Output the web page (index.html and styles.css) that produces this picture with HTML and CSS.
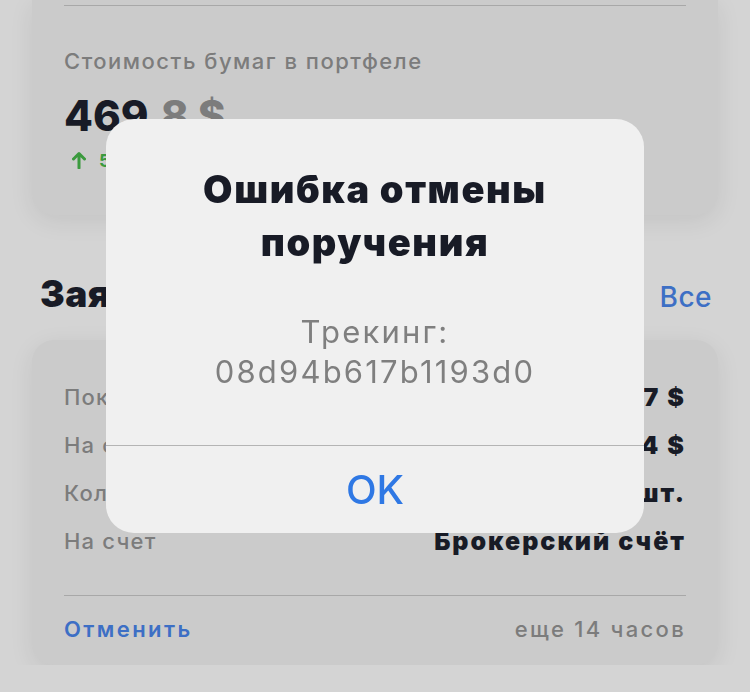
FILE: index.html
```html
<!DOCTYPE html>
<html lang="ru">
<head>
    <meta charset="UTF-8">
    <meta name="viewport" content="width=device-width, initial-scale=1.0">
    <title>Портфель</title>
    <link rel="stylesheet" href="styles.css">
</head>
<body>

    <div class="screen">
        <!-- сводка по портфелю -->
        <div class="card card-top">
            <div class="divider"></div>
            <div class="portfolio-label">Стоимость бумаг в портфеле</div>
            <div class="portfolio-value">469<span class="fraction">,8 $</span></div>
            <div class="change">
                <svg class="arrow" width="14" height="18" viewBox="0 0 14 18">
                    <path d="M7 17V3M1.5 8L7 2.5 12.5 8" fill="none" stroke="currentColor" stroke-width="3" stroke-linecap="round" stroke-linejoin="round"/>
                </svg>
                <span>5,1 $ (1,1%)</span>
            </div>
        </div>

        <div class="section-head">
            <h2>Заявки</h2>
            <a href="#" class="link-all">Все</a>
        </div>

        <!-- активная заявка -->
        <div class="card card-order">
            <div class="row"><span class="label">Покупка</span><span class="value">12,57 $</span></div>
            <div class="row"><span class="label">На сумму</span><span class="value">125,74 $</span></div>
            <div class="row"><span class="label">Количество</span><span class="value">10 шт.</span></div>
            <div class="row"><span class="label">На счет</span><span class="value">Брокерский счёт</span></div>
            <div class="divider divider-order"></div>
            <div class="order-footer">
                <a href="#" class="link-cancel">Отменить</a>
                <span class="expires">еще 14 часов</span>
            </div>
        </div>
    </div>

    <!-- окно с ошибкой -->
    <div class="overlay">
        <div class="alert">
            <div class="alert-body">
                <div class="alert-title">Ошибка отмены поручения</div>
                <div class="alert-text">Трекинг:<br>08d94b617b1193d0</div>
            </div>
            <button class="alert-button">OK</button>
        </div>
    </div>

</body>
</html>
```

FILE: styles.css
```css
body {
    font-family: Inter, 'Noto Sans', sans-serif;
    background-color: #d4d4d4;
    color: #181b26;
    margin: 0;
    overflow: hidden;
}
.screen {
    padding: 0 32px;
}
.card {
    background: #cbcbcb;
    border-radius: 22px;
    box-shadow: 0 6px 24px rgba(0, 0, 0, 0.08);
    padding: 0 32px;
}
.card-top {
    border-radius: 0 0 22px 22px;
    padding-top: 5px;
    padding-bottom: 43px;
}
.divider {
    height: 1px;
    background: #a8a8a8;
}
.portfolio-label {
    margin-top: 42px;
    font-size: 22px;
    line-height: 26px;
    font-weight: 500;
    color: #7c7c7c;
    letter-spacing: 1.5px;
}
.portfolio-value {
    margin-top: 16px;
    font-size: 42px;
    line-height: 52px;
    font-weight: 800;
}
.fraction {
    color: #7c7c7c;
}
.change {
    margin-top: 6px;
    display: flex;
    align-items: center;
    gap: 13px;
    height: 24px;
    padding-left: 8px;
    color: #3b9a3e;
    font-size: 18px;
    font-weight: 700;
}
.section-head {
    display: flex;
    justify-content: space-between;
    align-items: center;
    margin-top: 56px;
    padding: 0 6px 0 8px;
}
h2 {
    margin: 0;
    font-size: 37px;
    line-height: 46px;
    font-weight: 900;
    letter-spacing: 0.5px;
}
.link-all {
    font-size: 28px;
    color: #3d6fc5;
    text-decoration: none;
    font-weight: 500;
    letter-spacing: 0.5px;
    margin-top: 6px;
}
.card-order {
    margin-top: 23px;
    padding-top: 33px;
    padding-bottom: 21px;
}
.row {
    display: flex;
    justify-content: space-between;
    align-items: center;
    height: 48px;
}
.label {
    font-size: 22px;
    font-weight: 500;
    color: #7c7c7c;
    letter-spacing: 1.2px;
}
.value {
    font-size: 25px;
    font-weight: 900;
    letter-spacing: 2px;
}
.divider-order {
    margin-top: 30px;
}
.order-footer {
    display: flex;
    justify-content: space-between;
    align-items: center;
    margin-top: 18px;
    height: 30px;
}
.link-cancel {
    font-size: 22px;
    font-weight: 600;
    color: #3d6fc5;
    text-decoration: none;
    letter-spacing: 2.4px;
}
.expires {
    font-size: 22px;
    font-weight: 500;
    color: #7c7c7c;
    letter-spacing: 2.3px;
}
.overlay {
    position: fixed;
    inset: 0;
    display: flex;
    justify-content: center;
    align-items: flex-start;
    padding-top: 119px;
}
.alert {
    width: 538px;
    background: #f0f0f0;
    border-radius: 28px;
    overflow: hidden;
    text-align: center;
}
.alert-body {
    padding: 44px 20px 53px;
}
.alert-title {
    font-size: 38px;
    line-height: 53px;
    font-weight: 900;
    letter-spacing: 1.6px;
    padding: 0 50px;
}
.alert-text {
    margin-top: 43px;
    font-size: 31px;
    line-height: 40px;
    color: #7f7f7f;
    letter-spacing: 2.2px;
}
.alert-button {
    display: block;
    width: 100%;
    height: 88px;
    border: none;
    border-top: 1px solid #b4b4b4;
    background: none;
    font-family: inherit;
    font-size: 40px;
    font-weight: 500;
    color: #2f78e4;
    cursor: pointer;
}
```
